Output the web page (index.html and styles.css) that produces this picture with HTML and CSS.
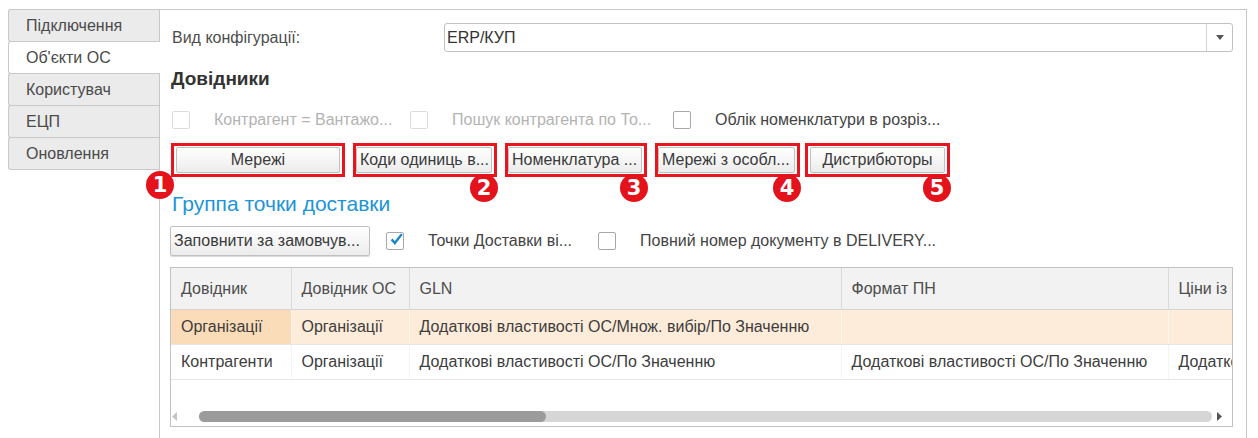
FILE: index.html
```html
<!DOCTYPE html>
<html lang="uk">
<head>
    <meta charset="UTF-8">
    <meta name="viewport" content="width=device-width, initial-scale=1.0">
    <title>Налаштування обміну</title>
    <link rel="stylesheet" href="styles.css">
</head>
<body>
    <div class="window">
        <nav class="tabs">
            <div class="tab">Підключення</div>
            <div class="tab active">Об'єкти ОС</div>
            <div class="tab">Користувач</div>
            <div class="tab">ЕЦП</div>
            <div class="tab">Оновлення</div>
        </nav>

        <main class="panel">
            <div class="field-row">
                <label class="field-label">Вид конфігурації:</label>
                <div class="select">
                    <span class="select-value">ERP/КУП</span>
                    <span class="select-btn">
                        <svg width="8" height="5" viewBox="0 0 8 5"><path d="M0 0h8L4 5z" fill="#555"/></svg>
                    </span>
                </div>
            </div>

            <h2 class="section-title">Довідники</h2>

            <div class="check-row">
                <label class="check disabled w1"><span class="box"></span>Контрагент = Вантажо...</label>
                <label class="check disabled w2"><span class="box"></span>Пошук контрагента по То...</label>
                <label class="check"><span class="box"></span>Облік номенклатури в розріз...</label>
            </div>

            <div class="button-row">
                <span class="mark m1"><button class="btn center">Мережі</button><span class="badge first">1</span></span>
                <span class="mark m2"><button class="btn">Коди одиниць в...</button><span class="badge">2</span></span>
                <span class="mark m3"><button class="btn">Номенклатура ...</button><span class="badge">3</span></span>
                <span class="mark m4"><button class="btn">Мережі з особл...</button><span class="badge">4</span></span>
                <span class="mark m5"><button class="btn center">Дистрибюторы</button><span class="badge">5</span></span>
            </div>

            <h3 class="group-title">Группа точки доставки</h3>

            <div class="check-row second">
                <button class="btn fill">Заповнити за замовчув...</button>
                <label class="check w3"><span class="box checked">
                    <svg width="16" height="14" viewBox="0 0 16 14"><path d="M2 7.5l4 4.5L14.5 1" fill="none" stroke="#1a86d0" stroke-width="3"/></svg>
                </span>Точки Доставки ві...</label>
                <label class="check"><span class="box"></span>Повний номер документу в DELIVERY...</label>
            </div>

            <div class="grid">
                <div class="grid-body">
                    <table>
                        <colgroup>
                            <col style="width:120px">
                            <col style="width:118px">
                            <col style="width:432px">
                            <col style="width:327px">
                            <col style="width:200px">
                        </colgroup>
                        <thead>
                            <tr>
                                <th>Довідник</th>
                                <th>Довідник ОС</th>
                                <th>GLN</th>
                                <th>Формат ПН</th>
                                <th>Ціни із ОС</th>
                            </tr>
                        </thead>
                        <tbody>
                            <tr class="selected">
                                <td class="current">Організації</td>
                                <td>Організації</td>
                                <td>Додаткові властивості ОС/Множ. вибір/По Значенню</td>
                                <td></td>
                                <td></td>
                            </tr>
                            <tr>
                                <td>Контрагенти</td>
                                <td>Організації</td>
                                <td>Додаткові властивості ОС/По Значенню</td>
                                <td>Додаткові властивості ОС/По Значенню</td>
                                <td>Додаткові властивості</td>
                            </tr>
                        </tbody>
                    </table>
                </div>
                <div class="hscroll">
                    <svg width="5" height="9" viewBox="0 0 5 9"><path d="M5 0v9L0 4.5z" fill="#c4c4c4"/></svg>
                    <div class="track"><div class="thumb"></div></div>
                    <svg width="5" height="9" viewBox="0 0 5 9"><path d="M0 0v9l5-4.5z" fill="#555"/></svg>
                </div>
            </div>
        </main>
    </div>
</body>
</html>
```

FILE: styles.css
```css
body {
    margin: 0;
    background-color: white;
    font-family: "Liberation Sans", Arial, sans-serif;
    font-size: 16px;
    color: #444;
}
.window {
    display: flex;
    height: 438px;
    padding: 9px 11px 0 8px;
    box-sizing: border-box;
    overflow: hidden;
}
.tabs {
    width: 151px;
    flex-shrink: 0;
}
.tab {
    position: relative;
    height: 33px;
    line-height: 31px;
    margin-top: -1px;
    padding-left: 17px;
    box-sizing: border-box;
    border: 1px solid #c9c9c9;
    border-right: none;
    border-radius: 3px 0 0 3px;
    background-color: #ebebeb;
    color: #4a4a4a;
}
.tab:first-child {
    margin-top: 0;
}
.tab.active {
    background-color: white;
    margin-right: -1px;
    z-index: 1;
}
.panel {
    flex: 1;
    min-width: 0;
    border: 1px solid #c8c8c8;
    border-bottom: none;
    padding: 13px 13px 0 10px;
}
.field-row {
    display: flex;
    align-items: center;
}
.field-label {
    width: 274px;
    padding-left: 2px;
    box-sizing: border-box;
    color: #4d4d4d;
}
.select {
    flex: 1;
    display: flex;
    height: 29px;
    border: 1px solid #c2c2c2;
    border-radius: 3px;
    box-sizing: border-box;
}
.select-value {
    flex: 1;
    padding-left: 2px;
    line-height: 27px;
    color: #333;
}
.select-btn {
    width: 25px;
    border-left: 1px solid #d4d4d4;
    display: flex;
    align-items: center;
    justify-content: center;
}
.section-title {
    margin: 15px 0 0 1px;
    font-size: 19px;
    line-height: 24px;
    font-weight: bold;
    color: #333;
}
.check-row {
    display: flex;
    align-items: center;
    height: 22px;
    margin-top: 18px;
    padding-left: 2px;
}
.check {
    display: flex;
    align-items: center;
    gap: 24px;
    white-space: nowrap;
    color: #444;
}
.check.disabled {
    color: #b3b3b3;
}
.w1 { width: 238px; }
.w2 { width: 263px; }
.w3 { width: 212px; }
.box {
    width: 18px;
    height: 18px;
    flex-shrink: 0;
    box-sizing: border-box;
    border: 1px solid #a8a8a8;
    border-radius: 2px;
    background-color: white;
    display: flex;
    align-items: center;
    justify-content: center;
}
.disabled .box {
    border-color: #dcdcdc;
}
.box.checked svg {
    margin-top: -5px;
    margin-left: 3px;
}
.button-row {
    display: flex;
    gap: 8px;
    margin-top: 12px;
    padding-left: 1px;
}
.mark {
    position: relative;
    display: flex;
    height: 34px;
    padding: 1px 2px;
    box-sizing: border-box;
    border: 3px solid #e8141e;
}
.m1 { width: 174px; }
.m2 { width: 144px; padding-left: 0; }
.m3 { width: 142px; padding-left: 0; }
.m4 { width: 145px; padding-left: 0; }
.m5 { width: 145px; margin-left: -3px; }
.btn {
    flex: 1;
    min-width: 0;
    height: 26px;
    padding: 0 3px;
    font-family: inherit;
    font-size: 16px;
    color: #3a3a3a;
    text-align: left;
    white-space: nowrap;
    overflow: hidden;
    border: 1px solid #c0c0c0;
    border-radius: 2px;
    background: linear-gradient(#ffffff, #ececec);
}
.btn.center {
    text-align: center;
}
.btn.fill {
    flex: none;
    width: 200px;
    height: 30px;
    margin-left: -2px;
    margin-right: 16px;
    box-shadow: 0 1px 1px rgba(0,0,0,0.15);
}
.badge {
    position: absolute;
    top: 28px;
    right: -4px;
    width: 28px;
    height: 28px;
    border-radius: 50%;
    background-color: #e3121b;
    color: white;
    font-family: "DejaVu Sans", sans-serif;
    font-weight: bold;
    font-size: 21px;
    line-height: 28px;
    text-align: center;
    z-index: 2;
}
.badge.first {
    right: auto;
    left: -28px;
    top: 25px;
}
.group-title {
    margin: 14px 0 0 2px;
    font-size: 21px;
    line-height: 26px;
    font-weight: normal;
    color: #1c95d8;
}
.check-row.second {
    height: 30px;
    margin-top: 9px;
}
.grid {
    display: flex;
    flex-direction: column;
    height: 160px;
    margin-top: 11px;
    border: 1px solid #c2c2c2;
    box-sizing: border-box;
    min-width: 0;
}
.grid-body {
    flex: 1;
    overflow: hidden;
}
table {
    table-layout: fixed;
    border-collapse: collapse;
    width: 1197px;
}
th, td {
    text-align: left;
    padding: 0 10px;
    white-space: nowrap;
    overflow: hidden;
    font-weight: normal;
}
th {
    height: 41px;
    background-color: #f2f2f2;
    color: #4d4d4d;
    border-right: 1px solid #dadada;
    border-bottom: 1px solid #d4d4d4;
}
td {
    height: 34px;
    color: #3d3d3d;
    border-right: 1px solid #f4f4f4;
    border-bottom: 1px solid #e6e6e6;
}
tr.selected td {
    background-color: #fdecd9;
    border-right-color: #fff6ee;
}
tr.selected td.current {
    background-color: #fbdcb9;
}
.hscroll {
    display: flex;
    align-items: center;
    height: 11px;
    margin-bottom: 4px;
    padding: 0 10px 0 1px;
}
.track {
    flex: 1;
    height: 11px;
    margin: 0 5px 0 22px;
    border-radius: 6px;
    background-color: #d6d6d6;
}
.thumb {
    width: 347px;
    height: 11px;
    border-radius: 6px;
    background-color: #9b9b9b;
}
```
